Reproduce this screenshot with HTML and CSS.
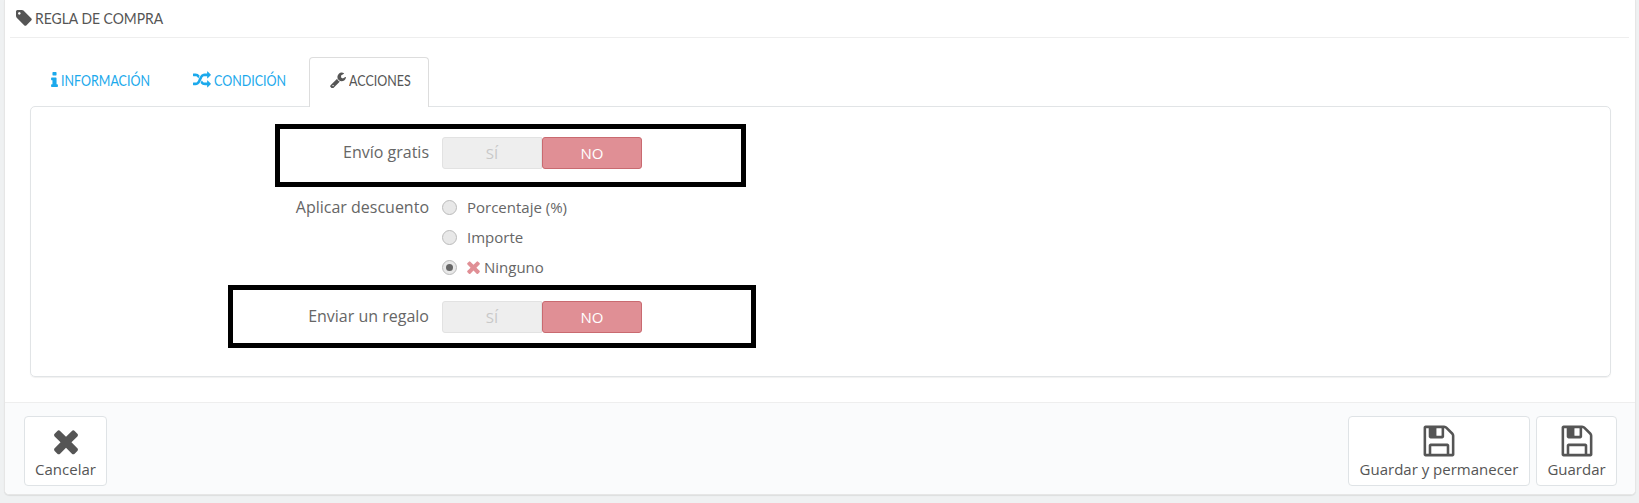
FILE: index.html
```html
<!DOCTYPE html>
<html lang="es">
<head>
    <meta charset="UTF-8">
    <title>Regla de compra</title>
    <link rel="stylesheet" href="styles.css">
</head>
<body>
    <div class="panel">
        <div class="panel-body">
            <h3 class="panel-heading">
                <svg class="icon icon-tag" viewBox="128 128 1536 1536"><path d="M576 448q0-53-37.5-90.5t-90.5-37.5-90.5 37.5-37.5 90.5 37.5 90.5 90.5 37.5 90.5-37.5 37.5-90.5zm1067 576q0 53-37 90l-491 492q-39 37-91 37-53 0-90-37l-715-716q-38-37-64.5-101t-26.5-117v-416q0-52 38-90t90-38h416q53 0 117 26.5t102 64.5l715 714q37 39 37 91z"/></svg>
                <span class="narrow narrow-heading">Regla de compra</span>
            </h3>

            <ul class="tabs">
                <li class="tab">
                    <svg class="icon icon-info" viewBox="576 128 640 1408"><path d="M1216 1344v128q0 26-19 45t-45 19h-512q-26 0-45-19t-19-45v-128q0-26 19-45t45-19h64v-384h-64q-26 0-45-19t-19-45v-128q0-26 19-45t45-19h384q26 0 45 19t19 45v576h64q26 0 45 19t19 45zm-128-1152v192q0 26-19 45t-45 19h-256q-26 0-45-19t-19-45v-192q0-26 19-45t45-19h256q26 0 45 19t19 45z"/></svg>
                    <span class="narrow narrow-info">Información</span>
                </li>
                <li class="tab">
                    <svg class="icon icon-random" viewBox="0 0 1792 1792"><path d="M666 481q-60 92-137 273-22-45-37-72.5t-40.5-63.5-51-56.5-63-35-81.5-14.5h-224q-14 0-23-9t-9-23v-192q0-14 9-23t23-9h224q250 0 410 225zm1126 799q0 14-9 23l-320 320q-9 9-23 9-13 0-22.5-9.5t-9.5-22.5v-192q-32 0-85 .5t-81 1-73-1-71-5-64-10.5-63-18.5-58-28.5-59-40-55-53.5-56-69.5q59-93 136-273 22 45 37 72.5t40.5 63.5 51 56.5 63 35 81.5 14.5h256v-192q0-14 9-23t23-9q12 0 24 10l319 319q9 9 9 23zm0-896q0 14-9 23l-320 320q-9 9-23 9-13 0-22.5-9.5t-9.5-22.5v-192h-256q-48 0-87 15t-69 45-51 61.5-45 77.5q-32 62-78 171-29 66-49.5 111t-54 105-64 100-74 83-90 68.5-106.5 42-128 16.5h-224q-14 0-23-9t-9-23v-192q0-14 9-23t23-9h224q48 0 87-15t69-45 51-61.5 45-77.5q32-62 78-171 29-66 49.5-111t54-105 64-100 74-83 90-68.5 106.5-42 128-16.5h256v-192q0-14 9-23t23-9q12 0 24 10l319 319q9 9 9 23z"/></svg>
                    <span class="narrow narrow-cond">Condición</span>
                </li>
                <li class="tab active">
                    <svg class="icon icon-wrench" viewBox="64 64 1664 1664"><path d="M448 1472q0-26-19-45t-45-19-45 19-19 45 19 45 45 19 45-19 19-45zm644-420l-682 682q-37 37-90 37-52 0-91-37l-106-108q-38-36-38-90 0-53 38-91l681-681q39 98 114.5 173.5t173.5 114.5zm634-435q0 39-23 106-47 134-164.5 217.5t-258.5 83.5q-185 0-316.5-131.5t-131.5-316.5 131.5-316.5 316.5-131.5q58 0 121.5 16.5t107.5 46.5q16 11 16 28t-16 28l-293 169v224l193 107q5-3 79-48.5t135.5-81 70.5-35.5q15 0 23.5 10t8.5 25z"/></svg>
                    <span class="narrow narrow-acc">Acciones</span>
                </li>
            </ul>

            <div class="tab-content">
                <div class="form-group switch-row">
                    <label class="form-label">Envío gratis</label>
                    <div class="switch">
                        <span class="switch-yes">SÍ</span>
                        <span class="switch-no">NO</span>
                    </div>
                    <div class="mark mark-first"></div>
                </div>

                <div class="form-group radio-row">
                    <label class="form-label">Aplicar descuento</label>
                    <div class="radio-list">
                        <div class="radio"><span class="radio-dot"></span>Porcentaje (%)</div>
                        <div class="radio"><span class="radio-dot"></span>Importe</div>
                        <div class="radio">
                            <span class="radio-dot checked"></span>
                            <svg class="icon icon-none" viewBox="302 238 1188 1316"><path d="M1490 1322q0 40-28 68l-136 136q-28 28-68 28t-68-28l-294-294-294 294q-28 28-68 28t-68-28l-136-136q-28-28-28-68t28-68l294-294-294-294q-28-28-28-68t28-68l136-136q28-28 68-28t68 28l294 294 294-294q28-28 68-28t68 28l136 136q28 28 28 68t-28 68l-294 294 294 294q28 28 28 68z"/></svg>
                            Ninguno
                        </div>
                    </div>
                </div>

                <div class="form-group switch-row">
                    <label class="form-label">Enviar un regalo</label>
                    <div class="switch">
                        <span class="switch-yes">SÍ</span>
                        <span class="switch-no">NO</span>
                    </div>
                    <div class="mark mark-second"></div>
                </div>
            </div>
        </div>

        <div class="panel-footer">
            <button class="btn">
                <svg class="btn-icon" viewBox="0 0 1792 1792"><path d="M1490 1322q0 40-28 68l-136 136q-28 28-68 28t-68-28l-294-294-294 294q-28 28-68 28t-68-28l-136-136q-28-28-28-68t28-68l294-294-294-294q-28-28-28-68t28-68l136-136q28-28 68-28t68 28l294 294 294-294q28-28 68-28t68 28l136 136q28 28 28 68t-28 68l-294 294 294 294q28 28 28 68z"/></svg>
                Cancelar
            </button>
            <div class="footer-right">
                <button class="btn btn-wide">
                    <svg class="btn-icon" viewBox="0 0 1792 1792"><path d="M512 1536h768v-384h-768v384zm896 0h128v-896q0-14-10-38.5t-20-34.5l-281-281q-10-10-34-20t-39-10v416q0 40-28 68t-68 28h-576q-40 0-68-28t-28-68v-416h-128v1280h128v-416q0-40 28-68t68-28h832q40 0 68 28t28 68v416zm-384-928v-320q0-13-9.5-22.5t-22.5-9.5h-192q-13 0-22.5 9.5t-9.5 22.5v320q0 13 9.5 22.5t22.5 9.5h192q13 0 22.5-9.5t9.5-22.5zm640 32v928q0 40-28 68t-68 28h-1344q-40 0-68-28t-28-68v-1344q0-40 28-68t68-28h928q40 0 88 20t76 48l280 280q28 28 48 76t20 88z"/></svg>
                    Guardar y permanecer
                </button>
                <button class="btn btn-save">
                    <svg class="btn-icon" viewBox="0 0 1792 1792"><path d="M512 1536h768v-384h-768v384zm896 0h128v-896q0-14-10-38.5t-20-34.5l-281-281q-10-10-34-20t-39-10v416q0 40-28 68t-68 28h-576q-40 0-68-28t-28-68v-416h-128v1280h128v-416q0-40 28-68t68-28h832q40 0 68 28t28 68v416zm-384-928v-320q0-13-9.5-22.5t-22.5-9.5h-192q-13 0-22.5 9.5t-9.5 22.5v320q0 13 9.5 22.5t22.5 9.5h192q13 0 22.5-9.5t9.5-22.5zm640 32v928q0 40-28 68t-68 28h-1344q-40 0-68-28t-28-68v-1344q0-40 28-68t68-28h928q40 0 88 20t76 48l280 280q28 28 48 76t20 88z"/></svg>
                    Guardar
                </button>
            </div>
        </div>
    </div>
</body>
</html>
```

FILE: styles.css
```css
* {
    box-sizing: border-box;
}
body {
    margin: 0;
    height: 503px;
    overflow: hidden;
    background-color: #eff1f2;
    font-family: "Open Sans", sans-serif;
    font-size: 14px;
    color: #555;
}
.icon {
    fill: currentColor;
    flex: none;
}
.icon-tag {
    width: 16px;
    height: 16px;
}
.icon-info {
    width: 7px;
    height: 15px;
}
.icon-random {
    width: 18px;
    height: 18px;
}
.icon-wrench {
    width: 16px;
    height: 16px;
}
.icon-none {
    width: 13px;
    height: 14px;
    color: #e08f95;
}
/* no condensed font installed, so the caps are squeezed inside a fixed box */
.narrow {
    display: inline-block;
    white-space: nowrap;
    font-family: "Lato", sans-serif;
    font-size: 16px;
    font-weight: normal;
    text-transform: uppercase;
    transform: scaleX(0.78);
    transform-origin: 0 50%;
}
.narrow-heading {
    width: 129px;
    transform: scaleX(0.87);
}
.narrow-info {
    width: 88px;
}
.narrow-cond {
    width: 72px;
}
.narrow-acc {
    width: 59px;
}
.panel {
    width: 1632px;
    height: 495px;
    margin-left: 4px;
    background-color: #fff;
    border: 1px solid #e6e6e6;
    border-top: none;
    border-radius: 0 0 5px 5px;
    box-shadow: 0 1px 1px rgba(0, 0, 0, 0.08);
    display: flex;
    flex-direction: column;
}
.panel-body {
    flex: 1;
    padding: 0 6px 0 5px;
}
.panel-heading {
    height: 38px;
    margin: 0;
    padding: 0 0 2px 6px;
    display: flex;
    align-items: center;
    gap: 3px;
    border-bottom: 1px solid #eee;
}
.tabs {
    list-style: none;
    margin: 19px 0 0 20px;
    padding: 0;
    display: flex;
    gap: 2px;
    height: 50px;
    position: relative;
    z-index: 1;
}
.tab {
    display: flex;
    align-items: center;
    gap: 3px;
    padding: 0 20px 6px;
    height: 50px;
    color: #1ba9ec;
    border: 1px solid transparent;
    border-bottom: none;
}
.tab.active {
    color: #555;
    background-color: #fff;
    border-color: #ddd;
    border-radius: 4px 4px 0 0;
}
.tab-content {
    height: 271px;
    margin: -1px 0 0 20px;
    width: 1581px;
    padding: 30px 0 0;
    border: 1px solid #e1e4e6;
    border-radius: 5px;
    box-shadow: 0 1px 1px rgba(0, 0, 0, 0.06);
}
.form-group {
    display: flex;
    position: relative;
}
.form-label {
    width: 411px;
    padding: 0 13px 2px 0;
    text-align: right;
    font-size: 16px;
    line-height: 20px;
    color: #666;
}
.switch-row {
    height: 32px;
    align-items: center;
}
.radio-row {
    margin: 28px 0 24px;
}
.switch {
    display: flex;
    width: 200px;
    height: 32px;
    font-size: 15px;
}
.switch-yes,
.switch-no {
    flex: 1;
    display: flex;
    align-items: center;
    justify-content: center;
}
.switch-yes {
    color: #c8c8c8;
    background-color: #eee;
    border: 1px solid #e2e2e2;
    border-radius: 3px 0 0 3px;
}
.switch-no {
    color: #fff;
    font-weight: 500;
    background-color: #e08f95;
    border: 1px solid #c96a70;
    border-radius: 3px;
}
.radio-list {
    display: flex;
    flex-direction: column;
    gap: 10px;
}
.radio {
    height: 20px;
    display: flex;
    align-items: center;
    gap: 4px;
    color: #666;
    font-size: 15px;
}
.radio-dot {
    width: 15px;
    height: 15px;
    margin-right: 6px;
    border-radius: 50%;
    border: 1px solid #bbb;
    background-color: #e8e8e8;
    position: relative;
}
.radio-dot.checked::after {
    content: "";
    position: absolute;
    left: 3px;
    top: 3px;
    width: 7px;
    height: 7px;
    border-radius: 50%;
    background-color: #666;
}
/* black annotation frames drawn over the form */
.mark {
    position: absolute;
    border: 5px solid #000;
    height: 63px;
    top: -13px;
}
.mark-first {
    left: 244px;
    width: 471px;
}
.mark-second {
    top: -16px;
    left: 197px;
    width: 528px;
}
.panel-footer {
    height: 92px;
    padding: 13px 18px 0 19px;
    display: flex;
    justify-content: space-between;
    background-color: #fafbfc;
    border-top: 1px solid #eee;
    border-radius: 0 0 5px 5px;
}
.footer-right {
    display: flex;
    gap: 6px;
}
.btn {
    height: 70px;
    width: 83px;
    display: flex;
    flex-direction: column;
    align-items: center;
    justify-content: flex-end;
    padding: 0 0 6px;
    background-color: #fff;
    border: 1px solid #dfe3e6;
    border-radius: 4px;
    color: #555;
    font-family: "Open Sans", sans-serif;
    font-size: 15px;
}
.btn-wide {
    width: 182px;
}
.btn-save {
    width: 81px;
}
.btn-icon {
    width: 36px;
    height: 36px;
    fill: currentColor;
}
```
